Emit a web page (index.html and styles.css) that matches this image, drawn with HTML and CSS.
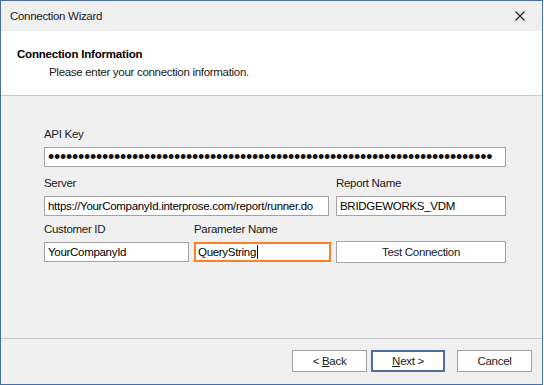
FILE: index.html
```html
<!DOCTYPE html>
<html lang="en">
<head>
  <meta charset="UTF-8" />
  <title>Connection Wizard</title>
  <link rel="stylesheet" href="styles.css">
</head>
<body>

  <div class="window">
    <div class="titlebar">
      <span class="title">Connection Wizard</span>
      <button class="close" aria-label="Close">
        <svg viewBox="0 0 10 10" width="10" height="10" aria-hidden="true">
          <path d="M0.5 0.5 L9.5 9.5 M9.5 0.5 L0.5 9.5" stroke="#1e1e1e" stroke-width="1.1" fill="none"/>
        </svg>
      </button>
    </div>

    <div class="header">
      <h1 class="header-title">Connection Information</h1>
      <p class="header-sub">Please enter your connection information.</p>
    </div>

    <div class="content">
      <div class="row">
        <div class="field field-full">
          <label class="label">API Key</label>
          <div class="input password">••••••••••••••••••••••••••••••••••••••••••••••••••••••••••••••••••••••••••</div>
        </div>
      </div>

      <div class="row">
        <div class="field field-server">
          <label class="label">Server</label>
          <div class="input">https://YourCompanyId.interprose.com/report/runner.do</div>
        </div>
        <div class="field field-report">
          <label class="label">Report Name</label>
          <div class="input">BRIDGEWORKS_VDM</div>
        </div>
      </div>

      <div class="row">
        <div class="field field-customer">
          <label class="label">Customer ID</label>
          <div class="input">YourCompanyId</div>
        </div>
        <div class="field field-param">
          <label class="label">Parameter Name</label>
          <div class="input focused">QueryString<span class="caret"></span></div>
        </div>
        <div class="field field-test">
          <button class="btn btn-test"><span>Test Connection</span></button>
        </div>
      </div>
    </div>

    <div class="footer">
      <button class="btn btn-nav"><span>&lt; <u>B</u>ack</span></button>
      <button class="btn btn-nav btn-default"><span><u>N</u>ext &gt;</span></button>
      <button class="btn btn-nav btn-cancel"><span>Cancel</span></button>
    </div>
  </div>

</body>
</html>
```

FILE: styles.css
```css
* {
  box-sizing: border-box;
  margin: 0;
  padding: 0;
}

body {
  background: #fff;
  font-family: 'Segoe UI', 'Liberation Sans', Arial, sans-serif;
  font-size: 11.5px;
  letter-spacing: -0.3px;
  color: #1a1a1a;
}

.window {
  width: 543px;
  height: 385px;
  border: 1px solid #4a6ea6;
  background: #f0f0f0;
  display: flex;
  flex-direction: column;
}

/* Title bar */
.titlebar {
  height: 30px;
  background: #efefef;
  display: flex;
  align-items: center;
  justify-content: space-between;
  padding-left: 9px;
}
.title {
  color: #1a1a1a;
}
.close {
  width: 42px;
  height: 30px;
  border: none;
  background: transparent;
  display: flex;
  align-items: center;
  justify-content: center;
  margin-right: 1px;
}

/* White header */
.header {
  height: 65px;
  background: #fff;
  border-bottom: 1px solid #c9c9c9;
  padding: 15px 0 0 16px;
}
.header-title {
  font-size: 11.5px;
  font-weight: 700;
  line-height: 16px;
  color: #000;
  letter-spacing: -0.2px;
}
.header-sub {
  margin-top: 2px;
  padding-left: 32px;
  line-height: 16px;
  color: #1a1a1a;
}

/* Form */
.content {
  height: 243px;
  border-bottom: 1px solid #c9c9c9;
  padding: 31px 0 0 43px;
  display: flex;
  flex-direction: column;
}
.row {
  display: flex;
  align-items: flex-end;
  margin-bottom: 9px;
}
.row:nth-child(2) {
  margin-bottom: 6px;
}

.field {
  display: flex;
  flex-direction: column;
}
.field-full { width: 462px; }
.field-server { width: 285px; margin-right: 7px; }
.field-report { width: 170px; }
.field-customer { width: 145px; margin-right: 5px; }
.field-param { width: 137px; margin-right: 5px; }
.field-test { width: 170px; }

.label {
  display: block;
  line-height: 15px;
  margin-bottom: 5px;
  color: #1a1a1a;
}

.input {
  height: 20px;
  background: #fff;
  border: 1px solid #a3a3a3;
  padding: 0 3px;
  line-height: 18px;
  white-space: nowrap;
  overflow: hidden;
  color: #000;
}
.input.password {
  font-size: 18px;
  letter-spacing: -0.3px;
  padding-left: 3px;
  line-height: 18px;
  color: #111;
}
.input.focused {
  border: 2px solid #ff7f27;
  padding: 0 2px;
  line-height: 16px;
}
.caret {
  display: inline-block;
  width: 1px;
  height: 14px;
  margin-left: 1px;
  background: #000;
  vertical-align: -3px;
}

/* Buttons */
.btn {
  font-family: inherit;
  font-size: 11.5px;
  letter-spacing: -0.3px;
  color: #1a1a1a;
  background: #fff;
  border: 1px solid #a3a3a3;
  display: flex;
  align-items: center;
  justify-content: center;
}
.btn-test {
  width: 170px;
  height: 22px;
  margin-bottom: -1px;
}

.footer {
  flex: 1;
  display: flex;
  justify-content: flex-end;
  align-items: flex-start;
  padding: 11px 10px 0 0;
}
.btn-nav {
  width: 75px;
  height: 22px;
}
.btn-default {
  border: 2px solid #4e6c9c;
  margin-left: 4px;
  width: 74px;
}
.btn-cancel {
  margin-left: 12px;
}
```
